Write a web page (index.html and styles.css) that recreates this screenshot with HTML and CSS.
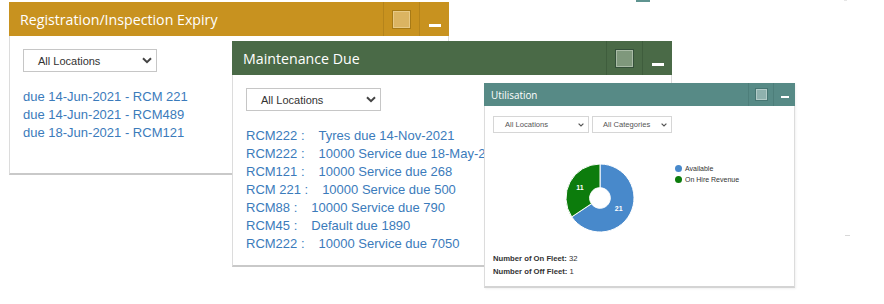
FILE: index.html
```html
<!DOCTYPE html>
<html>
<head>
<meta charset="utf-8">
<link rel="stylesheet" href="styles.css">
</head>
<body>
<div class="desk">
  <span class="stray stray-teal"></span>
  <span class="stray stray-top"></span>
  <span class="stray stray-dash"></span>

  <section class="win win-reg">
    <header class="win-head head-gold">
      <h2 class="win-title">Registration/Inspection Expiry</h2>
      <div class="ctl ctl-box"><span class="sq"></span></div>
      <div class="ctl ctl-min"><span class="bar"></span></div>
    </header>
    <div class="win-body body-reg">
      <div class="sel"><span>All Locations</span><svg class="chev" width="10" height="7" viewBox="0 0 10 7"><path d="M1 1.2 L5 5.2 L9 1.2" fill="none" stroke="#444" stroke-width="2"/></svg></div>
      <ul class="list">
        <li><a href="#">due 14-Jun-2021 - RCM 221</a></li>
        <li><a href="#">due 14-Jun-2021 - RCM489</a></li>
        <li><a href="#">due 18-Jun-2021 - RCM121</a></li>
      </ul>
    </div>
  </section>

  <section class="win win-maint">
    <header class="win-head head-green">
      <h2 class="win-title">Maintenance Due</h2>
      <div class="ctl ctl-box"><span class="sq"></span></div>
      <div class="ctl ctl-min"><span class="bar"></span></div>
    </header>
    <div class="win-body body-maint">
      <div class="sel"><span>All Locations</span><svg class="chev" width="10" height="7" viewBox="0 0 10 7"><path d="M1 1.2 L5 5.2 L9 1.2" fill="none" stroke="#444" stroke-width="2"/></svg></div>
      <ul class="list">
        <li><a href="#"><span class="code">RCM222 :</span><span class="desc">Tyres due 14-Nov-2021</span></a></li>
        <li><a href="#"><span class="code">RCM222 :</span><span class="desc">10000 Service due 18-May-2022</span></a></li>
        <li><a href="#"><span class="code">RCM121 :</span><span class="desc">10000 Service due 268</span></a></li>
        <li><a href="#"><span class="code">RCM 221 :</span><span class="desc">10000 Service due 500</span></a></li>
        <li><a href="#"><span class="code">RCM88 :</span><span class="desc">10000 Service due 790</span></a></li>
        <li><a href="#"><span class="code">RCM45 :</span><span class="desc">Default due 1890</span></a></li>
        <li><a href="#"><span class="code">RCM222 :</span><span class="desc">10000 Service due 7050</span></a></li>
      </ul>
    </div>
  </section>

  <section class="win win-util">
    <header class="win-head head-teal small">
      <h2 class="win-title">Utilisation</h2>
      <div class="ctl ctl-box"><span class="sq"></span></div>
      <div class="ctl ctl-min"><span class="bar"></span></div>
    </header>
    <div class="win-body body-util">
      <div class="sel-row">
        <div class="sel sel-sm sel-loc"><span>All Locations</span><svg class="chev" width="6" height="4" viewBox="0 0 6 4"><path d="M0.6 0.6 L3 3 L5.4 0.6" fill="none" stroke="#555" stroke-width="1.2"/></svg></div>
        <div class="sel sel-sm sel-cat"><span>All Categories</span><svg class="chev" width="6" height="4" viewBox="0 0 6 4"><path d="M0.6 0.6 L3 3 L5.4 0.6" fill="none" stroke="#555" stroke-width="1.2"/></svg></div>
      </div>
      <div class="chart">
        <svg class="donut" width="70" height="70" viewBox="0 0 70 70">
          <path d="M35 1 A34 34 0 1 1 6.73 53.89 L26.44 40.72 A10.3 10.3 0 1 0 35 24.7 Z" fill="#4889cb" stroke="#fff" stroke-width="1"/>
          <path d="M6.73 53.89 A34 34 0 0 1 35 1 L35 24.7 A10.3 10.3 0 0 0 26.44 40.72 Z" fill="#0c7c0c" stroke="#fff" stroke-width="1"/>
          <text x="15" y="27" class="dl">11</text>
          <text x="53.7" y="47.6" class="dl">21</text>
        </svg>
        <ul class="legend">
          <li><span class="dot dot-blue"></span>Available</li>
          <li><span class="dot dot-green"></span>On Hire Revenue</li>
        </ul>
      </div>
      <div class="stats">
        <p><b>Number of On Fleet:</b> 32</p>
        <p><b>Number of Off Fleet:</b> 1</p>
      </div>
    </div>
  </section>
</div>
</body>
</html>
```

FILE: styles.css
```css
html, body {
  margin: 0;
  padding: 0;
  background: #fff;
}
.desk {
  position: relative;
  width: 884px;
  height: 304px;
  overflow: hidden;
  font-family: "Liberation Sans", Arial, sans-serif;
}
.stray {
  position: absolute;
  display: block;
}
.stray-teal {
  left: 636px;
  top: 0;
  width: 14px;
  height: 2px;
  background: #5f9490;
}
.stray-top {
  left: 844px;
  top: 0;
  width: 3px;
  height: 1px;
  background: #e6e6e6;
}
.stray-dash {
  left: 845px;
  top: 235px;
  width: 5px;
  height: 1px;
  background: #d8d8d8;
}

.win {
  position: absolute;
  background: #fff;
  display: flex;
  flex-direction: column;
}
.win-reg { left: 9px; top: 2px; width: 440px; }
.win-maint { left: 232px; top: 41px; width: 440px; }
.win-util { left: 484px; top: 83px; width: 311px; box-shadow: 1px 1px 2px rgba(0,0,0,0.06); }

.win-head {
  display: flex;
  align-items: stretch;
  height: 34px;
}
.head-gold { background: #c8921f; --sep: #b5841b; --sq: #dbb462; --sqb: #a77a16; --sqi: #e7c986; }
.head-green { background: #4a6a47; --sep: #3f5d3d; --sq: #7f987c; --sqb: #34503a; --sqi: #a9bba6; }
.head-teal { background: #578a86; --sep: #4d7e7a; --sq: #8fb1ae; --sqb: #467572; --sqi: #b2cbc8; }

.win-title {
  flex: 1;
  margin: 0;
  padding-left: 11px;
  font-family: "Open Sans", sans-serif;
  font-weight: normal;
  font-size: 14.2px;
  color: #fff;
  display: flex;
  align-items: center;
}
.ctl {
  border-left: 1px solid var(--sep);
  display: flex;
  justify-content: center;
}
.ctl-box { width: 35px; align-items: center; }
.ctl-min { width: 29px; align-items: flex-end; }
.sq {
  width: 17px;
  height: 17px;
  background: var(--sq);
  border: 1px solid var(--sqb);
  box-shadow: inset 0 0 0 1px var(--sqi);
}
.bar {
  width: 12px;
  height: 3px;
  margin-bottom: 9px;
  background: #fff;
}

.small { height: 23px; }
.small .win-title { font-size: 9.9px; padding-left: 7px; }
.small .ctl-box { width: 24px; }
.small .ctl-min { width: 21px; }
.small .sq { width: 11px; height: 11px; }
.small .bar { width: 8px; height: 2px; margin-bottom: 8px; }

.win-body {
  border: 1px solid #dcdcdc;
  border-top: none;
  border-bottom: 2px solid #c9c9c9;
  padding: 13px 13px 0;
}
.body-reg { padding-bottom: 31px; }
.body-maint { padding-bottom: 12px; }
.body-util { padding: 10px 8px 8px; border-bottom-color: #d4d4d4; }

.sel {
  box-sizing: border-box;
  width: 134px;
  height: 23px;
  border: 1px solid #c6c6c6;
  background: #fff;
  display: flex;
  align-items: center;
  justify-content: space-between;
  padding: 0 4px 0 14px;
  font-size: 11px;
  color: #333;
}
.body-maint .sel { width: 135px; }

.list {
  list-style: none;
  margin: 16px 0 0;
  padding: 0;
  font-size: 13px;
  line-height: 18px;
}
.list a {
  color: #3b7bbb;
  text-decoration: none;
  white-space: nowrap;
}
.desc { margin-left: 14px; }

.sel-row {
  display: flex;
  gap: 3px;
}
.sel-sm {
  height: 17px;
  font-size: 7.6px;
  color: #555;
  padding: 0 4px 0 11px;
  border-color: #d6d6d6;
}
.sel-loc { width: 96px; }
.sel-cat { width: 80px; padding-left: 10px; }

.chart {
  display: flex;
  align-items: flex-start;
  margin-top: 30px;
  padding-left: 72px;
}
.donut { display: block; }
.dl {
  fill: #fff;
  font-size: 7px;
  font-weight: bold;
  text-anchor: middle;
  font-family: "Liberation Sans", Arial, sans-serif;
}
.legend {
  list-style: none;
  margin: 0 0 0 40px;
  padding: 0;
  font-size: 7px;
  line-height: 11px;
  color: #333;
}
.legend li {
  display: flex;
  align-items: center;
  gap: 3px;
}
.dot {
  width: 7px;
  height: 7px;
  border-radius: 50%;
}
.dot-blue { background: #4889cb; }
.dot-green { background: #0c7c0c; }

.stats {
  margin-top: 20px;
  font-size: 7.7px;
  line-height: 12.7px;
  color: #333;
}
.stats p { margin: 0; }
.stats b { color: #333; }
```
